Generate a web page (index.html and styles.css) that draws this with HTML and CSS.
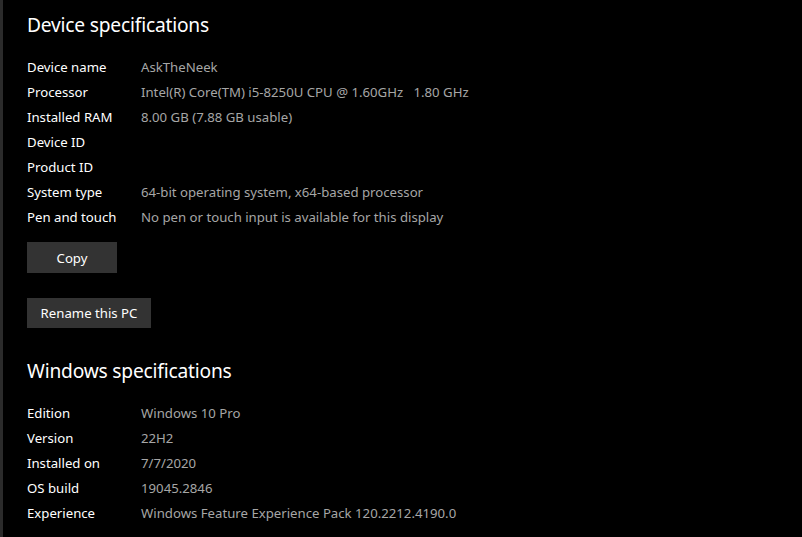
FILE: index.html
```html
<!DOCTYPE html>
<html>
<head>
<meta charset="utf-8">
<link rel="stylesheet" href="styles.css">
</head>
<body>
<div class="page">
  <section class="section">
    <h2 class="title">Device specifications</h2>
    <div class="specs">
      <div class="label">Device name</div><div class="value">AskTheNeek</div>
      <div class="label">Processor</div><div class="value">Intel(R) Core(TM) i5-8250U CPU @ 1.60GHz&nbsp;&nbsp;&nbsp;1.80 GHz</div>
      <div class="label">Installed RAM</div><div class="value">8.00 GB (7.88 GB usable)</div>
      <div class="label">Device ID</div><div class="value"></div>
      <div class="label">Product ID</div><div class="value"></div>
      <div class="label">System type</div><div class="value">64-bit operating system, x64-based processor</div>
      <div class="label">Pen and touch</div><div class="value">No pen or touch input is available for this display</div>
    </div>
    <button class="btn btn-copy">Copy</button>
    <button class="btn btn-rename">Rename this PC</button>
  </section>
  <section class="section section-win">
    <h2 class="title">Windows specifications</h2>
    <div class="specs">
      <div class="label">Edition</div><div class="value">Windows 10 Pro</div>
      <div class="label">Version</div><div class="value">22H2</div>
      <div class="label">Installed on</div><div class="value">7/7/2020</div>
      <div class="label">OS build</div><div class="value">19045.2846</div>
      <div class="label">Experience</div><div class="value">Windows Feature Experience Pack 120.2212.4190.0</div>
    </div>
  </section>
</div>
</body>
</html>
```
FILE: styles.css
```css
html, body {
  margin: 0;
  padding: 0;
  background: #000;
  height: 100%;
}
body {
  font-family: "Noto Sans", "Open Sans", sans-serif;
  color: #fff;
  border-left: 3px solid #2b2b2b;
  box-sizing: border-box;
  overflow: hidden;
}
.page {
  padding: 11px 0 0 24px;
}
.section {
  display: flex;
  flex-direction: column;
  align-items: flex-start;
}
.title {
  margin: 0;
  font-weight: 400;
  font-size: 19.2px;
  line-height: 28px;
  letter-spacing: -0.2px;
  color: #fff;
}
.specs {
  display: grid;
  grid-template-columns: 114px auto;
  margin-top: 15.5px;
  font-size: 13.2px;
  line-height: 25px;
}
.label {
  color: #fff;
}
.value {
  color: #a6a6a6;
}
.btn {
  border: none;
  background: #333;
  color: #fff;
  font-family: inherit;
  font-size: 13.2px;
  padding: 0;
  cursor: pointer;
}
.btn-copy {
  margin-top: 12.5px;
  width: 90px;
  height: 31px;
}
.btn-rename {
  margin-top: 25px;
  width: 124px;
  height: 30px;
}
.section-win {
  margin-top: 29px;
}
```
